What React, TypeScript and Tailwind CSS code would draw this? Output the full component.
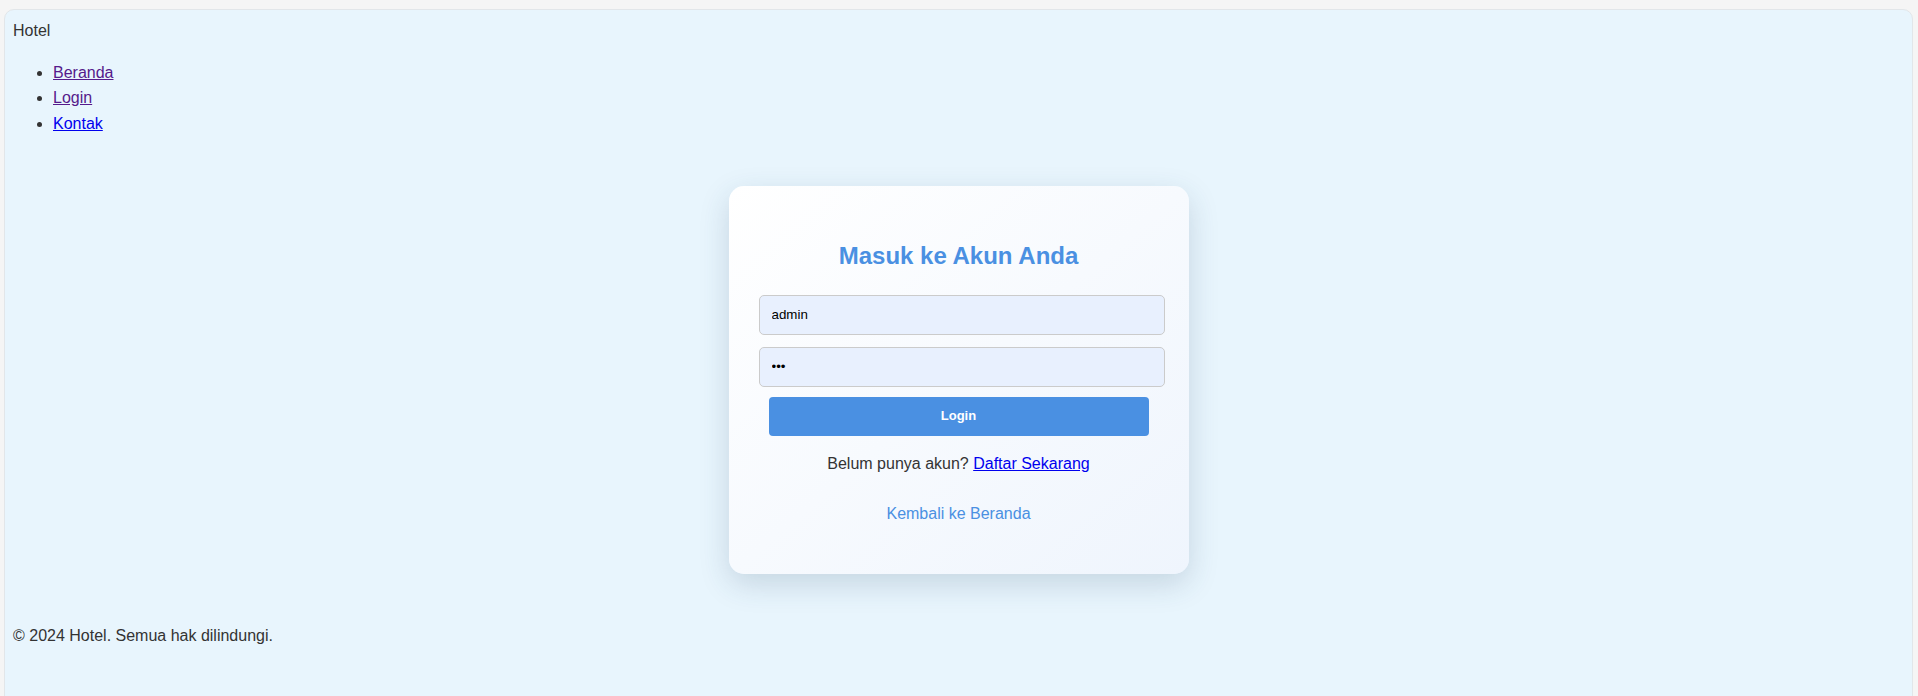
import React from "react";

const font = { fontFamily: '"Liberation Sans", Arial, sans-serif' };

const NavLinks = () => {
    const links = [
        {label: "Beranda", visited: true},
        {label: "Login", visited: true},
        {label: "Kontak", visited: false},
    ];
    return <ul className="list-disc pl-10 my-4">
        {links.map(l =>
            <li key={l.label}>
                <a href="#"
                   className={`underline ${l.visited ? "text-[#551a8b]" : "text-[#0000ee]"}`}>
                    {l.label}
                </a>
            </li>
        )}
    </ul>
}

const LoginCard = () => {
    return <div
        className="w-[460px] rounded-[15px] p-[30px] bg-linear-to-br from-white to-[#eff5fd] shadow-[0_10px_30px_rgba(40,70,100,0.18)]">
        <h2 className="mt-[21px] mb-[19px] text-center text-[24px] leading-[38.4px] font-bold text-[#4a90e2]">
            Masuk ke Akun Anda
        </h2>
        <form className="flex flex-col items-start" onSubmit={e => e.preventDefault()}>
            <input
                type="text"
                readOnly
                defaultValue="admin"
                className="w-[406px] h-[40px] px-[12px] rounded-[5px] border border-[#cbcbcb] bg-[#e8f0fe] text-[13.33px] text-black outline-none"
                style={font}/>
            <input
                type="password"
                readOnly
                defaultValue="abc"
                className="mt-[12px] w-[406px] h-[40px] px-[12px] rounded-[5px] border border-[#cbcbcb] bg-[#e8f0fe] text-[13.33px] text-black outline-none"
                style={font}/>
            <button
                type="submit"
                className="mt-[10px] mx-auto w-[380px] h-[39px] rounded-[4px] bg-[#4a90e2] text-white text-[13px] font-bold cursor-pointer">
                Login
            </button>
        </form>
        <p className="mt-[15px] text-center">
            Belum punya akun? <a href="#" className="underline text-[#0000ee]">Daftar Sekarang</a>
        </p>
        <p className="mt-[25px] mb-[17px] text-center">
            <a href="#" className="text-[#4a90e2]">Kembali ke Beranda</a>
        </p>
    </div>
}

export default function App() {
    return <div className="min-h-screen bg-[#f5f5f5] pt-[9px] pl-[4px] pr-[5px] text-[16px] leading-[1.6] text-[#333]"
                style={font}>
        <div className="rounded-[10px] border border-[#e2e6e9] bg-[#e8f5fd] p-[8px] pb-[60px]">
            <header>
                <div>Hotel</div>
                <nav>
                    <NavLinks/>
                </nav>
            </header>
            <main className="flex justify-center pt-[34px] pb-[49px]">
                <LoginCard/>
            </main>
            <footer>
                <p>© 2024 Hotel. Semua hak dilindungi.</p>
            </footer>
        </div>
    </div>
}
